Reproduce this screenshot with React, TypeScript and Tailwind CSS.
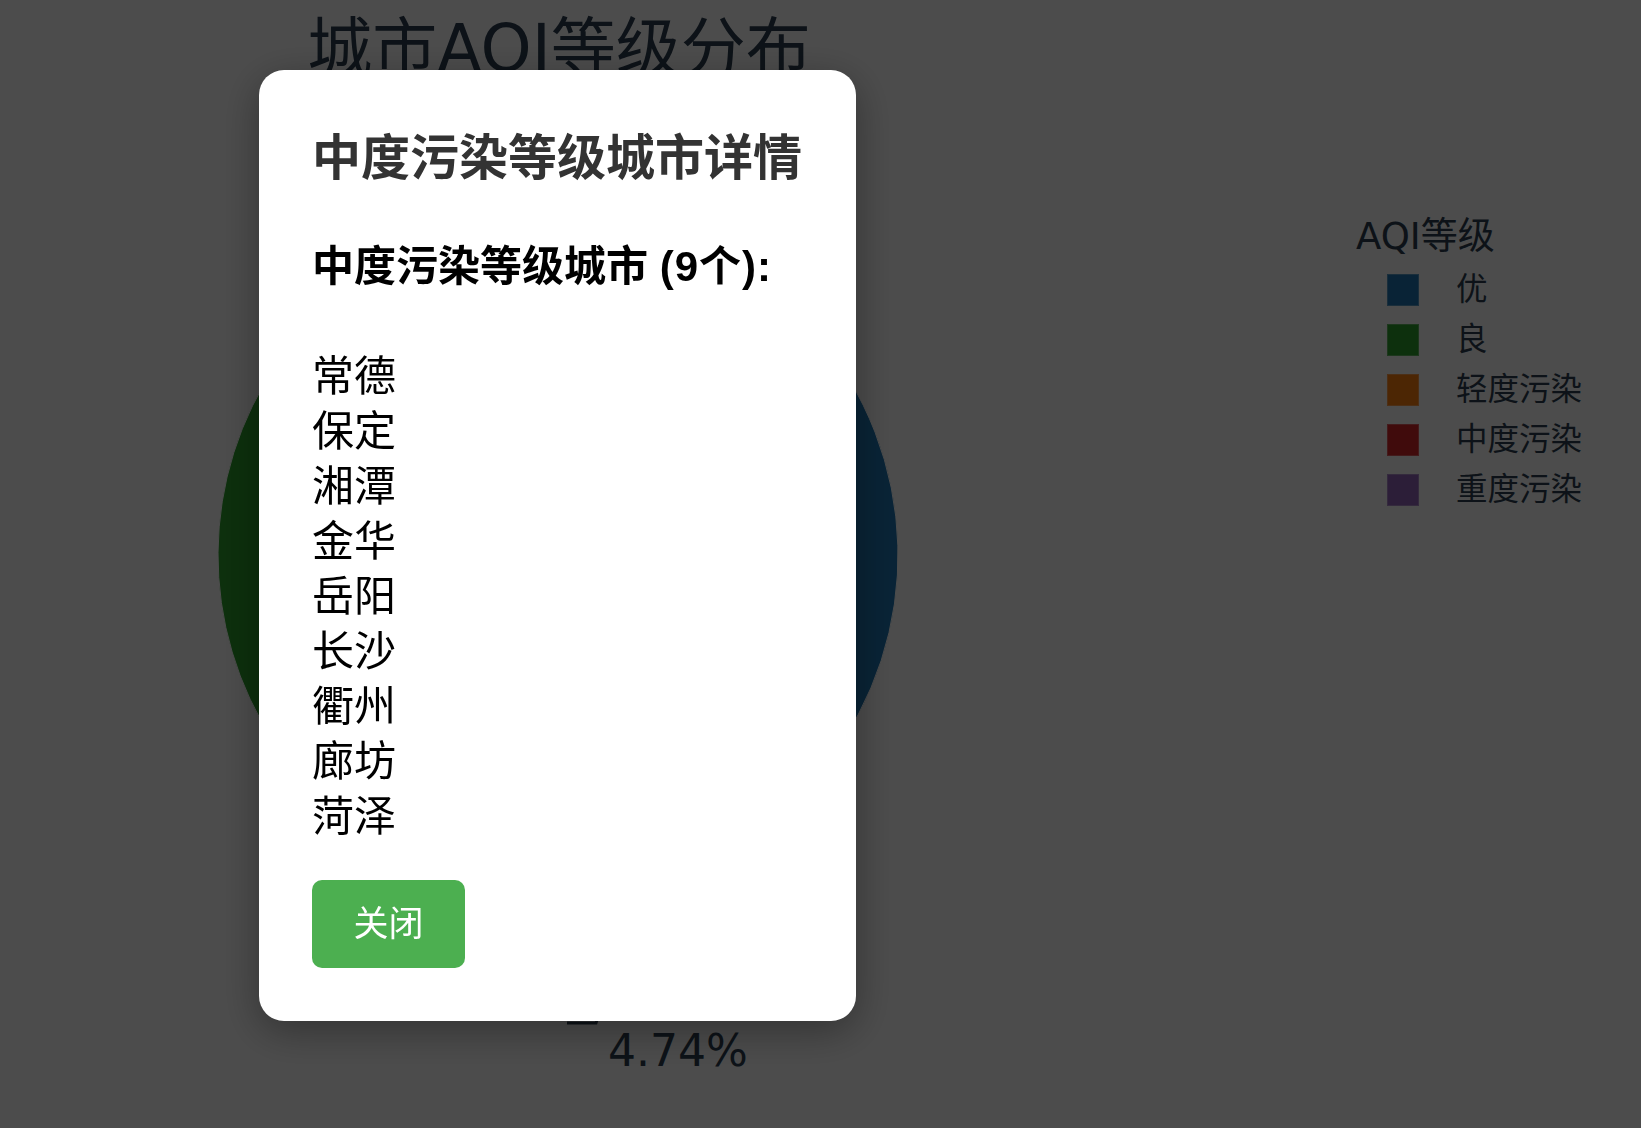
import React from 'react'

type Level = { name: string; color: string; count: number }

// legend order
const levels = [
  { name: '优', color: '#1f77b4' },
  { name: '良', color: '#2ca02c' },
  { name: '轻度污染', color: '#ff7f0e' },
  { name: '中度污染', color: '#d62728' },
  { name: '重度污染', color: '#9467bd' },
]

// pie order, clockwise from 12 o'clock (190 cities)
const slices: Level[] = [
  { name: '优', color: '#1f77b4', count: 83 },
  { name: '中度污染', color: '#d62728', count: 9 },
  { name: '重度污染', color: '#9467bd', count: 8 },
  { name: '轻度污染', color: '#ff7f0e', count: 18 },
  { name: '良', color: '#2ca02c', count: 72 },
]

const cities = ['常德', '保定', '湘潭', '金华', '岳阳', '长沙', '衢州', '廊坊', '菏泽']

const CX = 558
const CY = 466
const R = 340

function arcPath(a0: number, a1: number) {
  const rad = (d: number) => (d * Math.PI) / 180
  const x0 = CX + R * Math.sin(rad(a0))
  const y0 = CY - R * Math.cos(rad(a0))
  const x1 = CX + R * Math.sin(rad(a1))
  const y1 = CY - R * Math.cos(rad(a1))
  const large = a1 - a0 > 180 ? 1 : 0
  return `M ${CX} ${CY} L ${x0} ${y0} A ${R} ${R} 0 ${large} 1 ${x1} ${y1} Z`
}

function PieChart() {
  const total = slices.reduce((s, d) => s + d.count, 0)
  let start = 0
  const arcs = slices.map((d) => {
    const sweep = (d.count / total) * 360
    const a = { ...d, a0: start, a1: start + sweep }
    start += sweep
    return a
  })

  return (
    <svg width={1118} height={1039} className="block">
      {arcs.map((a) => (
        <path key={a.name} d={arcPath(a.a0, a.a1)} fill={a.color} stroke="#ffffff" strokeWidth={1} />
      ))}
      {/* leader line + label for 中度污染 */}
      <polyline
        points="640,800 596,934 567,934"
        fill="none"
        stroke="#2c3e50"
        strokeWidth={3}
      />
      <text x={678} y={977} fontSize={44} fill="#2c3e50" textAnchor="middle">
        4.74%
      </text>
    </svg>
  )
}

function Legend() {
  return (
    <div className="ml-[238px] pt-[215px] text-[#2c3e50]">
      <div className="text-[37px] leading-[44px] whitespace-nowrap">AQI等级</div>
      <div className="mt-[6px]">
        {levels.map((l) => (
          <div key={l.name} className="flex h-[50px] items-center">
            <span
              className="ml-[31px] h-8 w-8 shrink-0 border border-white/25"
              style={{ backgroundColor: l.color }}
            />
            <span className="ml-[37px] text-[31.5px] whitespace-nowrap">{l.name}</span>
          </div>
        ))}
      </div>
    </div>
  )
}

export default function App() {
  return (
    <div className="relative h-[1128px] w-[1641px] overflow-hidden bg-white font-['DejaVu_Sans','Noto_Sans_CJK_SC',sans-serif]">
      <div className="flex">
        {/* Chart column */}
        <div className="flex w-[1118px] flex-col items-center">
          <h1 className="mt-[9px] text-[65px] leading-[80px] text-[#2c3e50] whitespace-nowrap">城市AQI等级分布</h1>
          <PieChart />
        </div>
        <Legend />
      </div>

      {/* Modal overlay */}
      <div className="fixed inset-0 bg-black/70 pl-[259px] pt-[70px]">
        <div className="w-[597px] rounded-[25px] bg-white p-[53px] font-['Liberation_Sans','Noto_Sans_CJK_SC',sans-serif] shadow-[0_10px_40px_rgba(0,0,0,0.35)]">
          <h2 className="text-[49px] font-bold leading-[70px] text-[#333333] whitespace-nowrap">中度污染等级城市详情</h2>
          <h3 className="mt-[46px] text-[42px] font-bold leading-[55px] text-black whitespace-nowrap">
            中度污染等级城市 <span className="tracking-[1px]">(9个):</span>
          </h3>
          <ul className="mt-[55px] text-[42px] leading-[55px] text-black">
            {cities.map((c) => (
              <li key={c}>{c}</li>
            ))}
          </ul>
          <button className="mt-[36px] h-[88px] w-[153px] rounded-[10px] bg-[#4CAF50] text-[35px] text-white">
            关闭
          </button>
        </div>
      </div>
    </div>
  )
}
